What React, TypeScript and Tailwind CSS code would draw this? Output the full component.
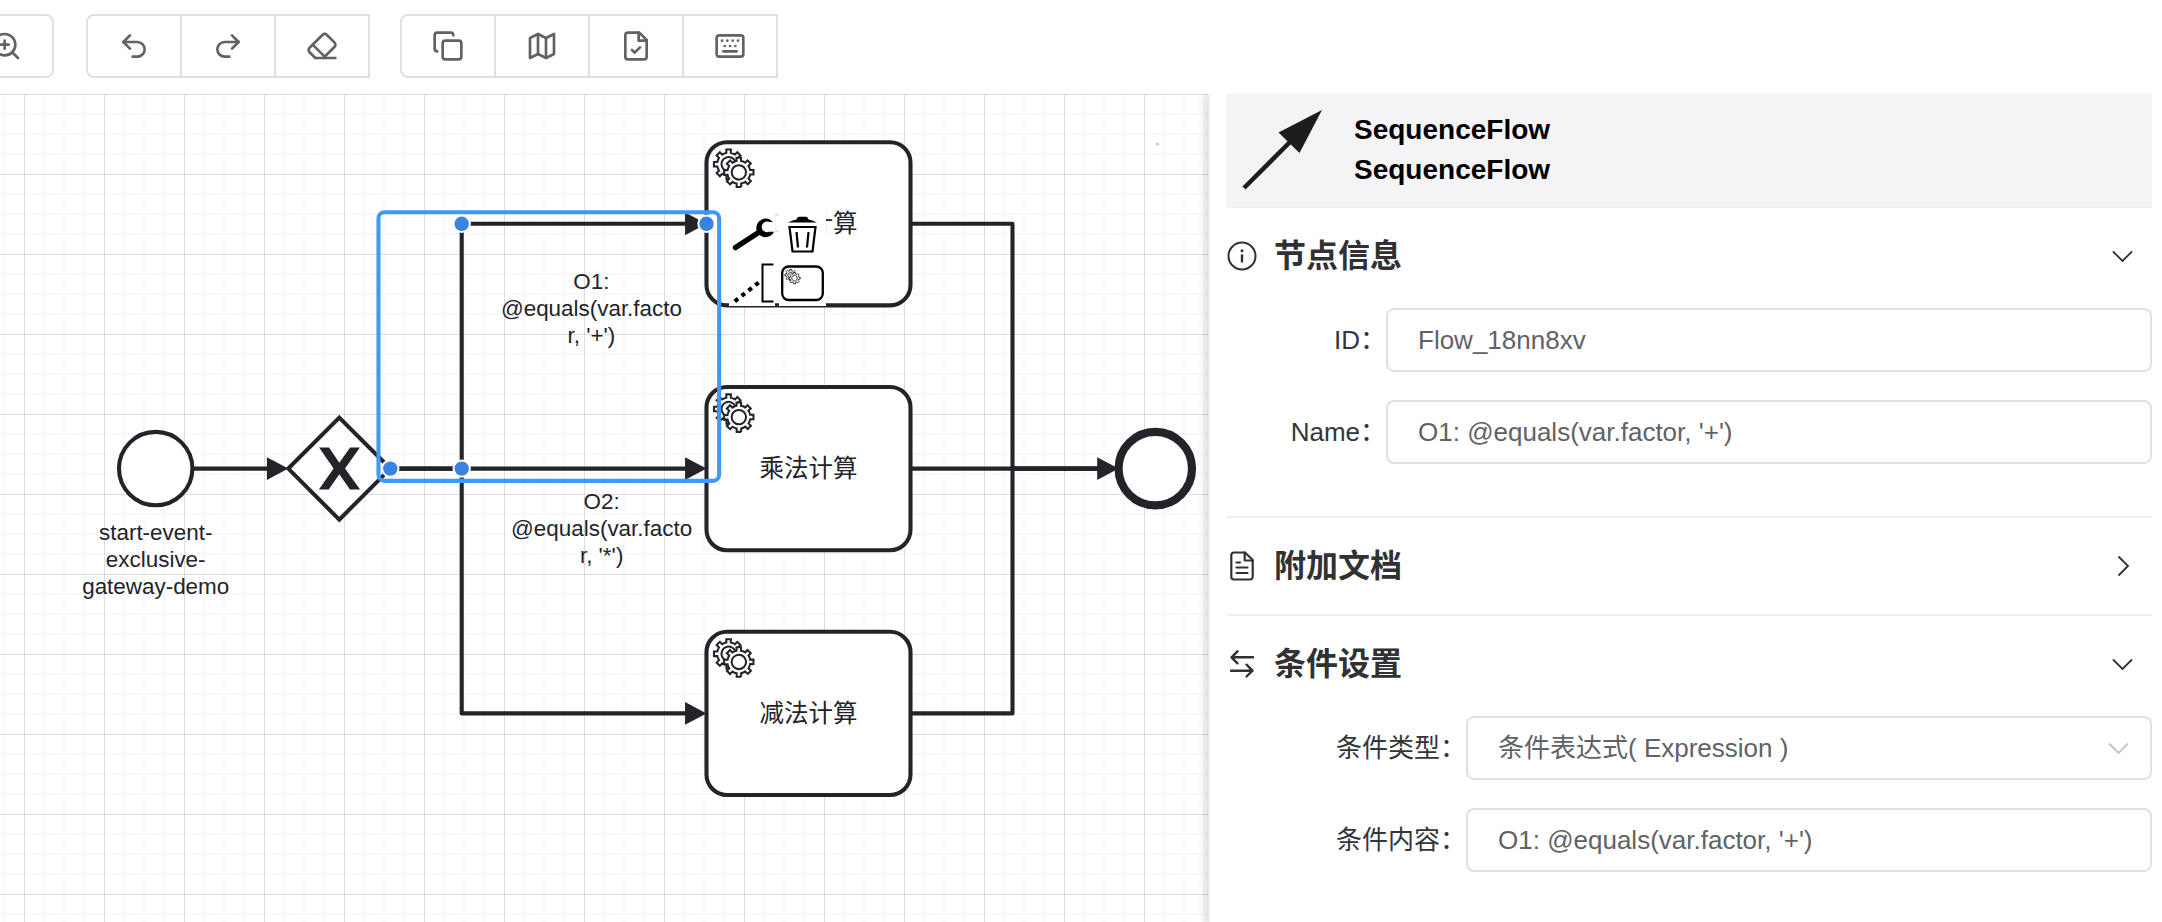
import type { ReactNode } from "react";

const INK = "#22242a";

const GEAR_OUTLINE =
  "v -1.71335 c 0.352326,-0.0705 0.703932,-0.17838 1.047628,-0.32133 0.344416,-0.14465 0.665822,-0.32133 0.966377,-0.52145 l 1.19431,1.18005 1.567487,-1.57688 -1.195028,-1.18014 c 0.403376,-0.61394 0.683079,-1.29908 0.825447,-2.01824 l 1.622133,-0.01 v -2.2196 l -1.636514,0.01 c -0.07333,-0.35153 -0.178319,-0.70024 -0.323564,-1.04372 -0.145244,-0.34406 -0.321407,-0.6644 -0.522735,-0.96217 l 1.131035,-1.13631 -1.583305,-1.56293 -1.129598,1.13589 c -0.614052,-0.40108 -1.302883,-0.68093 -2.022633,-0.82247 l 0.0093,-1.61852 h -2.241173 l 0.0042,1.63124 c -0.353763,0.0736 -0.705369,0.17977 -1.049785,0.32371 -0.344415,0.14437 -0.665102,0.32092 -0.9635006,0.52006 l -1.1698628,-1.15823 -1.5667691,1.5792 1.1684265,1.15669 c -0.4026573,0.61283 -0.68308,1.29797 -0.8247287,2.01713 l -1.6588041,0.003 v 2.22174 l 1.6724648,-0.006 c 0.073327,0.35077 0.1797598,0.70243 0.3242851,1.04472 0.1452428,0.34448 0.3214064,0.6644 0.5227339,0.96066 l -1.1993431,1.19723 1.5840256,1.56011 1.1964668,-1.19348 c 0.6140517,0.40346 1.3028827,0.68232 2.0233517,0.82331 l 7.19e-4,1.69892 h 2.226848 z m 0.221462,-3.9957 c -1.788948,0.7502 -3.8576,-0.0928 -4.6097055,-1.87438 -0.7521065,-1.78321 0.090598,-3.84627 1.8802645,-4.59604 1.78823,-0.74936 3.856881,0.0929 4.608987,1.87437 0.752106,1.78165 -0.0906,3.84612 -1.879546,4.59605 z";

function Gears({ stroke = INK }: { stroke?: string }) {
  return (
    <g fill="#fff" stroke={stroke} strokeWidth="1">
      <path d={`m 12,18 ${GEAR_OUTLINE}`} />
      <circle cx="15.7" cy="15.2" r="4.6" stroke="none" />
      <path d={`m 17,22 ${GEAR_OUTLINE}`} />
    </g>
  );
}

function ToolIcon({ children }: { children: ReactNode }) {
  return (
    <svg
      viewBox="0 0 24 24"
      className="size-8 shrink-0"
      fill="none"
      stroke="currentColor"
      strokeWidth="2"
      strokeLinecap="round"
      strokeLinejoin="round"
      aria-hidden="true"
    >
      {children}
    </svg>
  );
}

type Tool = { label: string; icon: ReactNode };

const historyTools: Tool[] = [
  {
    label: "撤销",
    icon: (
      <>
        <path d="M9 14 4 9l5-5" />
        <path d="M4 9h10.500a5.500 5.500 0 0 1 0 11H11" />
      </>
    ),
  },
  {
    label: "恢复",
    icon: (
      <>
        <path d="m15 14 5-5-5-5" />
        <path d="M20 9H9.500a5.500 5.500 0 0 0 0 11H13" />
      </>
    ),
  },
  {
    label: "清空",
    icon: (
      <>
        <path d="m7 21-4.300-4.300c-1-1-1-2.500 0-3.400l9.600-9.600c1-1 2.500-1 3.400 0l5.600 5.600c1 1 1 2.500 0 3.400L13 21" />
        <path d="M22 21H7" />
        <path d="m5 11 9 9" />
      </>
    ),
  },
];

const viewTools: Tool[] = [
  {
    label: "复制",
    icon: (
      <>
        <rect x="8" y="8" width="14" height="14" rx="2" />
        <path d="M4 16c-1.100 0-2-.9-2-2V4c0-1.100.9-2 2-2h10c1.100 0 2 .9 2 2" />
      </>
    ),
  },
  {
    label: "小地图",
    icon: (
      <>
        <polygon points="3 6 9 3 15 6 21 3 21 18 15 21 9 18 3 21" />
        <path d="M9 3v15" />
        <path d="M15 6v15" />
      </>
    ),
  },
  {
    label: "校验",
    icon: (
      <>
        <path d="M14.500 2H6a2 2 0 0 0-2 2v16a2 2 0 0 0 2 2h12a2 2 0 0 0 2-2V7.500L14.500 2z" />
        <path d="M14 2v6h6" />
        <path d="m9 15 2 2 4-4" />
      </>
    ),
  },
  {
    label: "快捷键",
    icon: (
      <>
        <rect x="2" y="4" width="20" height="16" rx="2" />
        <path d="M6 8h.01M10 8h.01M14 8h.01M18 8h.01M8 12h.01M12 12h.01M16 12h.01M7 16h10" />
      </>
    ),
  },
];

function ToolButton({ label, icon, className }: Tool & { className: string }) {
  return (
    <button
      type="button"
      aria-label={label}
      className={`-ml-0.5 flex h-16 w-24 items-center justify-center border-2 border-[#dfdfe5] text-[#606266] ${className}`}
    >
      <ToolIcon>{icon}</ToolIcon>
    </button>
  );
}

function ToolGroup({ tools }: { tools: Tool[] }) {
  return (
    <div className="flex pl-0.5">
      {tools.map((t) => (
        <ToolButton key={t.label} {...t} className="first:rounded-l-lg" />
      ))}
    </div>
  );
}

function Task({ y, name }: { y: number; name: string }) {
  return (
    <g transform={`translate(270 ${y - 40})`}>
      <rect width="100" height="80" rx="10" fill="#fff" fillOpacity="0.95" stroke={INK} strokeWidth="2" />
      <Gears />
      <text x="50" y="44" textAnchor="middle" fontSize="12" fill={INK}>
        {name}
      </text>
    </g>
  );
}

function Label({ x, y, lines }: { x: number; y: number; lines: string[] }) {
  return (
    <text textAnchor="middle" fontSize="11" fill={INK}>
      {lines.map((line, i) => (
        <tspan key={line} x={x} y={y + i * 13.2}>
          {line}
        </tspan>
      ))}
    </text>
  );
}

function Arrow({ x, y }: { x: number; y: number }) {
  return <path d={`M${x} ${y} l-10.500 -5.600 v11.200 z`} fill={INK} />;
}

function ContextPad() {
  return (
    <g>
      <g fill="#fff">
        <rect x="729" y="210" width="46" height="96" />
        <rect x="779" y="210" width="47" height="96" />
        <rect x="729" y="212" width="97" height="88" fillOpacity="0.85" />
      </g>
      <path d="M735.500 247.500 L757 233.500" stroke="#000" strokeWidth="5.500" strokeLinecap="round" />
      <path
        d="M773 222.300 A9.300 9.300 0 1 0 774 231.800 L769 231.800 A5.300 5.300 0 1 1 768.500 221.800 Z"
        fill="#000"
      />
      <path d="M788 222.500 Q793 220 796.500 219.500 Q797 216.800 799 216.800 H806 Q808 216.800 808.500 219.500 Q812 220 817 222.500 Z" fill="#000" />
      <path
        d="M789.500 227 H815.500 L812.500 251.500 H792.500 Z M796.500 232 L798 247.500 M808.500 232 L807 247.500"
        fill="none"
        stroke="#000"
        strokeWidth="2.200"
      />
      <path d="M773.500 264.500 H762.500 V301.500 H773.500" fill="none" stroke="#000" strokeWidth="2" />
      <path d="M734.800 301.300 L760 281.500" stroke="#000" strokeWidth="4.200" strokeDasharray="4.200 4.500" />
      <rect x="782.200" y="266.500" width="40.600" height="33.500" rx="6.500" fill="#fff" stroke="#000" strokeWidth="2.300" />
      <g transform="translate(782 266.500) scale(0.79)">
        <Gears stroke="#000" />
      </g>
    </g>
  );
}

function Diagram() {
  return (
    <svg
      className="block size-full font-['Liberation_Sans','Noto_Sans_CJK_SC',sans-serif]"
      role="img"
      aria-label="流程图"
    >
      <defs>
        <pattern id="grid" x="24" y="0" width="80" height="80" patternUnits="userSpaceOnUse">
          <path d="M20 0V80M40 0V80M60 0V80M0 20H80M0 40H80M0 60H80" stroke="#f8f8f8" strokeWidth="2" />
          <path d="M0.500 0V80M0 0.500H80" stroke="#dcdcdc" strokeWidth="1" />
        </pattern>
      </defs>
      <rect width="100%" height="100%" fill="url(#grid)" />
      <g transform="translate(155.700 374.600) scale(2.040)">
        <g fill="none" stroke={INK} strokeWidth="2" strokeLinejoin="round">
          <path d="M18 0H57" />
          <path d="M115 0H262" />
          <path d="M115 0H150V-120H262" />
          <path d="M150 0V120H262" />
          <path d="M370 0H464" />
          <path d="M370 -120H420V0H464" />
          <path d="M370 120H420V0H464" />
        </g>
        <Arrow x={65} y={0} />
        <circle r="18" fill="#fff" fillOpacity="0.95" stroke={INK} strokeWidth="2" />
        <Label x={0} y={35} lines={["start-event-", "exclusive-", "gateway-demo"]} />
        <path d="M90 -25L115 0L90 25L65 0Z" fill="#fff" fillOpacity="0.95" stroke={INK} strokeWidth="2" />
        <path
          d="M80.100 -10.300H85L90 -2.900L95.300 -10.300H100.100L92.800 0L100.200 10.300H95.200L90 2.800L84.800 10.300H80L87.200 0Z"
          fill={INK}
        />
        <Task y={-120} name="加法计算" />
        <Task y={0} name="乘法计算" />
        <Task y={120} name="减法计算" />
        <Arrow x={270} y={-120} />
        <Arrow x={270} y={0} />
        <Arrow x={270} y={120} />
        <Arrow x={472} y={0} />
        <circle cx="490" r="18" fill="#fff" fillOpacity="0.95" stroke={INK} strokeWidth="4" />
        <Label x={213.6} y={-88} lines={["O1:", "@equals(var.facto", "r, '+')"]} />
        <Label x={218.6} y={20} lines={["O2:", "@equals(var.facto", "r, '*')"]} />
        <rect x="109.200" y="-125.700" width="167" height="131.700" rx="3" fill="none" stroke="#4098fc" strokeWidth="2" />
      </g>
      <circle cx="1157.500" cy="50" r="1.500" fill="#c4c4c4" />
      <g transform="translate(0 -94)">
        <ContextPad />
        <g fill="#3884e0" stroke="#fff" strokeWidth="2">
          <circle cx="390.300" cy="468.600" r="8.200" />
          <circle cx="461.700" cy="468.600" r="8.200" />
          <circle cx="461.700" cy="223.800" r="8.200" />
          <circle cx="706.500" cy="223.800" r="8.200" />
        </g>
      </g>
    </svg>
  );
}

function Chevron({ open, className }: { open: boolean; className: string }) {
  return (
    <svg viewBox="0 0 28 28" className={`size-7 shrink-0 ${className}`} fill="none" stroke="currentColor" strokeWidth="1.800" strokeLinecap="round" aria-hidden="true">
      <path d={open ? "M5.500 10L14.500 19L23.500 10" : "M11 5L20 14L11 23"} />
    </svg>
  );
}

function Section({ title, icon, open, children }: { title: string; icon: ReactNode; open: boolean; children?: ReactNode }) {
  return (
    <section className="border-b-2 border-[#efeff5] last:border-b-0">
      <h2>
        <button type="button" aria-expanded={open} className="flex h-24 w-full items-center gap-4 pr-4 text-[#303133]">
          {icon}
          <span className="flex-1 text-left text-[32px] leading-10 font-bold">{title}</span>
          <Chevron open={open} className="" />
        </button>
      </h2>
      {open && <div className="flex flex-col gap-7 pt-1 pb-[52px]">{children}</div>}
    </section>
  );
}

function SectionIcon({ children }: { children: ReactNode }) {
  return (
    <svg viewBox="0 0 32 32" className="size-8 shrink-0" fill="none" stroke="currentColor" strokeWidth="2.400" strokeLinecap="round" strokeLinejoin="round" aria-hidden="true">
      {children}
    </svg>
  );
}

function Field({ id, label, labelClass, children }: { id: string; label: string; labelClass: string; children: ReactNode }) {
  return (
    <div className="flex items-center">
      <label htmlFor={id} className={`shrink-0 text-right text-[26px] leading-10 text-[#333639] ${labelClass}`}>
        {`${label}\uFF1A`}
      </label>
      <div className="relative flex-1">{children}</div>
    </div>
  );
}

const control =
  "block h-16 w-full appearance-none rounded-lg border-2 border-[#e0e0e6] bg-white px-[30px] text-[26px] text-[#606266] outline-none";

export default function App() {
  return (
    <div lang="zh-CN" className="flex min-h-screen flex-col overflow-hidden bg-white font-['Liberation_Sans','Noto_Sans_CJK_SC',sans-serif]">
      <header className="-ml-10 flex gap-[30px] pt-3.5 pb-4">
        <div className="mr-0.5 flex">
          <ToolButton
            label="放大"
            className="rounded-r-lg"
            icon={
              <>
                <circle cx="11" cy="11" r="8" />
                <path d="m21 21-4.350-4.350M11 8v6M8 11h6" />
              </>
            }
          />
        </div>
        <ToolGroup tools={historyTools} />
        <ToolGroup tools={viewTools} />
      </header>
      <main className="flex flex-1 overflow-hidden">
        <div className="relative min-w-0 flex-1">
          <div className="absolute inset-0">
            <Diagram />
          </div>
        </div>
        <aside className="relative w-[954px] shrink-0 border-l-2 border-[#efefef] bg-white pr-2.5 pl-4 shadow-[0_0_10px_rgba(0,0,0,0.25)]">
          <div className="flex items-center gap-8 border-b-2 border-[#efeff5] bg-[#f4f4f7] p-4">
            <svg viewBox="0 0 80 80" className="size-20 shrink-0" aria-hidden="true">
              <path d="M2 78L48 32" stroke="#1d1d20" strokeWidth="4.500" />
              <path d="M80 0L36.500 22.500L57.500 43Z" fill="#1d1d20" />
            </svg>
            <div className="text-[28px] leading-10 font-bold text-black">
              <p>SequenceFlow</p>
              <p>SequenceFlow</p>
            </div>
          </div>
          <Section
            title="节点信息"
            open
            icon={
              <SectionIcon>
                <circle cx="16" cy="16" r="13.500" strokeWidth="2" />
                <path d="M16 15.500V21.500" />
                <path d="M16 10.800h.01" strokeWidth="3" />
              </SectionIcon>
            }
          >
            <Field id="node-id" label="ID" labelClass="w-40">
              <input id="node-id" defaultValue="Flow_18nn8xv" className={control} />
            </Field>
            <Field id="node-name" label="Name" labelClass="w-40">
              <input id="node-name" defaultValue="O1: @equals(var.factor, '+')" className={control} />
            </Field>
          </Section>
          <Section
            title="附加文档"
            open={false}
            icon={
              <SectionIcon>
                <path d="M19 2.500H8a2.700 2.700 0 0 0-2.700 2.700v21.600A2.700 2.700 0 0 0 8 29.500h16a2.700 2.700 0 0 0 2.700-2.700V10L19 2.500z" strokeWidth="2.200" />
                <path d="M18.700 2.500V10.500H26.700" strokeWidth="2.200" />
                <path d="M10.500 12.500H14M10.500 17.500H21.500M10.500 23H21.500" strokeWidth="2.200" />
              </SectionIcon>
            }
          />
          <Section
            title="条件设置"
            open
            icon={
              <SectionIcon>
                <path d="M27 9.300H5.500M11.500 3.300L5.500 9.300L11.500 15.300M5 22.700H26.500M20.500 16.700L26.500 22.700L20.500 28.500" strokeWidth="2.400" />
              </SectionIcon>
            }
          >
            <Field id="condition-type" label="条件类型" labelClass="w-60">
              <select id="condition-type" className={control}>
                <option>条件表达式( Expression )</option>
              </select>
              <Chevron open className="pointer-events-none absolute top-[18px] right-5 text-[#c2c2cc]" />
            </Field>
            <Field id="condition-body" label="条件内容" labelClass="w-60">
              <input id="condition-body" defaultValue="O1: @equals(var.factor, '+')" className={control} />
            </Field>
          </Section>
        </aside>
      </main>
    </div>
  );
}
